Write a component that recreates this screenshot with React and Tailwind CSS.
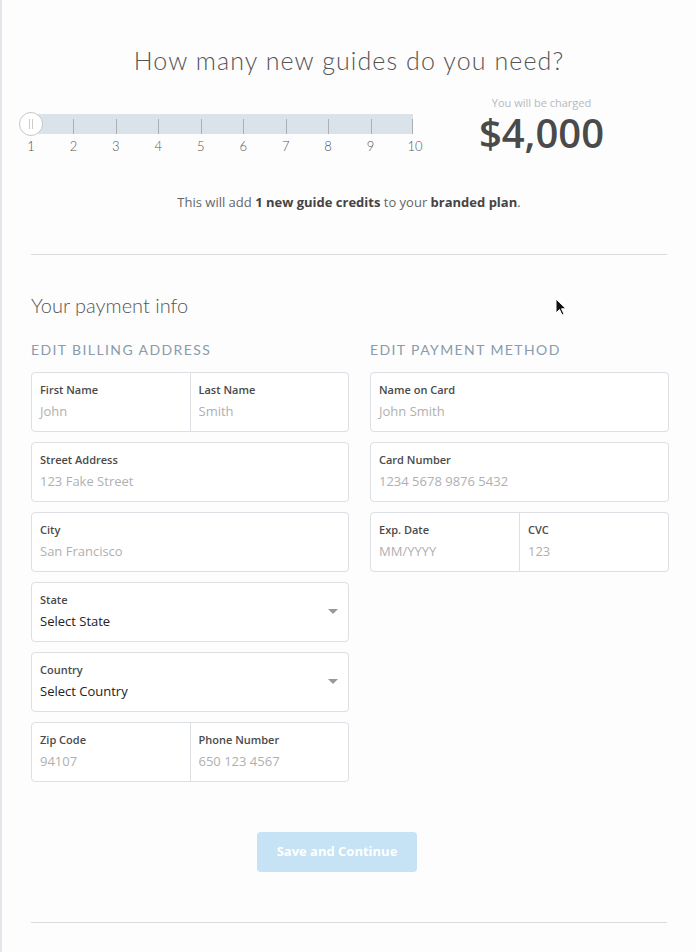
import React, { useState } from 'react';

const ticks = [2, 3, 4, 5, 6, 7, 8, 9, 10];

function Field({ label, value, select, className = '' }) {
  return (
    <div className={`relative flex-1 px-2 pt-[9px] pb-2 ${className}`}>
      <div className="text-[11px] font-semibold leading-4 text-[#4a4a4a]">{label}</div>
      <div className={`mt-[5px] text-[13px] leading-4 ${select ? 'text-[#222]' : 'text-[#b0b0b0]'}`}>{value}</div>
      {select && (
        <svg className="absolute right-[10px] top-[26px]" width="10" height="6" viewBox="0 0 10 6">
          <path d="M0 0h10L5 5z" fill="#999" />
        </svg>
      )}
    </div>
  );
}

function Box({ children }) {
  return (
    <div className="flex h-[60px] rounded border border-[#dcdfe3] bg-white">{children}</div>
  );
}

export default function App() {
  const [guides] = useState(1);

  return (
    <div className="min-h-[952px] w-[696px] border-l-2 border-[#e3e6ea] bg-[#fdfdfd] font-['Open_Sans',sans-serif] text-[#444]">
      <div className="px-[29px] pt-[44px]">
        <h1 className="text-center font-['Lato',sans-serif] text-[25px] font-light leading-8 tracking-[1.1px] text-[#555]">
          How many new guides do you need?
        </h1>

        {/* slider + price */}
        <div className="mt-[23px] flex items-start">
          <div className="w-[382px] pt-[15px]">
            <div className="relative h-5 bg-[#dbe3ea]">
              {ticks.map((t) => (
                <div
                  key={t}
                  className="absolute top-[5px] h-[15px] w-px bg-[#a9b1b8]"
                  style={{ left: `${((t - 1) / 9) * 100}%`, marginLeft: t === 10 ? '-1px' : 0 }}
                />
              ))}
              <div className="absolute -left-[12px] -top-[2px] flex h-6 w-6 items-center justify-center gap-[2px] rounded-full border border-[#c7c7c7] bg-white">
                <span className="h-[10px] w-px bg-[#ccc]" />
                <span className="h-[10px] w-px bg-[#ccc]" />
              </div>
            </div>
            <div className="relative mt-[3px] h-4 font-['Lato',sans-serif] text-[13px] font-light text-[#555]">
              {[1, ...ticks].map((t) => (
                <span
                  key={t}
                  className="absolute -translate-x-1/2"
                  style={{ left: `${((t - 1) / 9) * 100}%`, marginLeft: t === 10 ? '2px' : 0 }}
                >
                  {t}
                </span>
              ))}
            </div>
          </div>
          <div className="-mt-[2px] flex-1 text-center">
            <div className="pl-[3px] text-[11px] leading-[12px] text-[#b5b9bd]">You will be charged</div>
            <div className="mt-[4px] pl-[3px] text-[40px] font-semibold leading-[40px] text-[#4a4a4a]">
              ${(guides * 4000).toLocaleString('en-US')}
            </div>
          </div>
        </div>

        <p className="mt-[40px] text-center text-[13px] text-[#666]">
          This will add <b className="font-bold text-[#444]">{guides} new guide credits</b> to your{' '}
          <b className="font-bold text-[#444]">branded plan</b>.
        </p>

        <div className="mt-[41px] border-t border-[#dcdcdc]" />

        <div className="relative">
          <h2 className="mt-[38px] font-['Lato',sans-serif] text-[20px] font-light leading-6 text-[#555]">Your payment info</h2>
          <svg className="absolute left-[524px] top-[5px]" width="12" height="18" viewBox="0 0 12 18">
            <path d="M1 1v14l3.5-3.5 2.5 5.5 2-1-2.5-5.2H11z" fill="#111" stroke="#fff" strokeWidth="1" />
          </svg>
        </div>

        <div className="mt-[23px] grid grid-cols-[318px_299px] gap-x-[21px]">
          <div>
            <div className="mb-[12px] font-['Lato',sans-serif] text-[14px] font-normal uppercase leading-5 tracking-[1.4px] text-[#8a9bab]">
              Edit billing address
            </div>
            <div className="flex flex-col gap-[10px]">
              <Box>
                <Field label="First Name" value="John" className="border-r border-[#dcdfe3]" />
                <Field label="Last Name" value="Smith" />
              </Box>
              <Box>
                <Field label="Street Address" value="123 Fake Street" />
              </Box>
              <Box>
                <Field label="City" value="San Francisco" />
              </Box>
              <Box>
                <Field label="State" value="Select State" select />
              </Box>
              <Box>
                <Field label="Country" value="Select Country" select />
              </Box>
              <Box>
                <Field label="Zip Code" value="94107" className="border-r border-[#dcdfe3]" />
                <Field label="Phone Number" value="650 123 4567" />
              </Box>
            </div>
          </div>
          <div>
            <div className="mb-[12px] font-['Lato',sans-serif] text-[14px] font-normal uppercase leading-5 tracking-[1.4px] text-[#8a9bab]">
              Edit payment method
            </div>
            <div className="flex flex-col gap-[10px]">
              <Box>
                <Field label="Name on Card" value="John Smith" />
              </Box>
              <Box>
                <Field label="Card Number" value="1234 5678 9876 5432" />
              </Box>
              <Box>
                <Field label="Exp. Date" value="MM/YYYY" className="border-r border-[#dcdfe3]" />
                <Field label="CVC" value="123" />
              </Box>
            </div>
          </div>
        </div>

        <div className="mt-[50px] flex pl-[226px]">
          <button className="h-10 w-[160px] rounded bg-[#c6e2f5] text-[13px] font-bold text-white">
            Save and Continue
          </button>
        </div>

        <div className="mt-[50px] border-t border-[#dcdcdc]" />
      </div>
    </div>
  );
}
